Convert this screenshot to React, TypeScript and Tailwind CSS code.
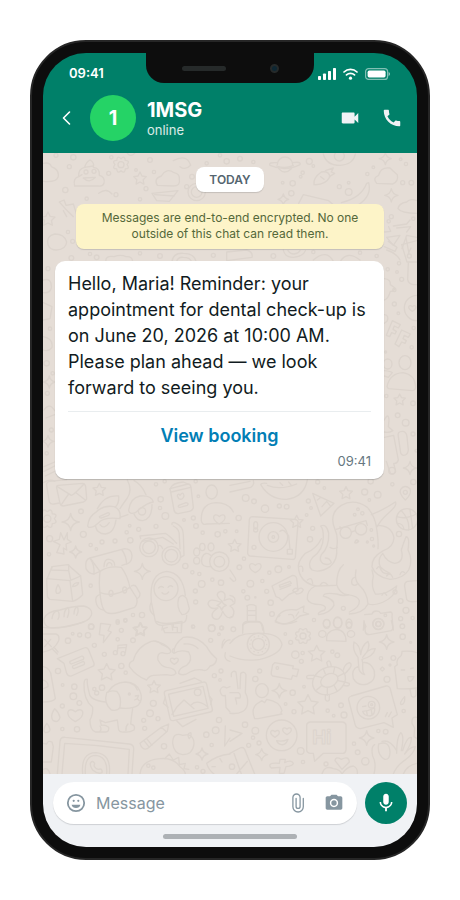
import type { ReactNode } from "react";
import { MdCall, MdMic, MdPhotoCamera, MdVideocam } from "react-icons/md";

// ─────────────────────────────────────────────────────────────────────────────
// Chat preview — a phone frame with one business message in it
// ─────────────────────────────────────────────────────────────────────────────

interface Message {
  text: string;
  action: string;
  time: string;
}

const CONTACT = { initial: "1", name: "1MSG", status: "online" };

const MESSAGE: Message = {
  text: "Hello, Maria! Reminder: your appointment for dental check-up is on June 20, 2026 at 10:00 AM. Please plan ahead — we look forward to seeing you.",
  action: "View booking",
  time: "09:41",
};

// ── Wallpaper ────────────────────────────────────────────────────────────────

type Spot = [x: number, y: number, r: number];

interface TileProps {
  x: number;
  y: number;
  lines: string[];
  dots?: Spot[];
  stars?: Spot[];
  sparkles?: Spot[];
  gears?: Spot[];
  hearts?: Spot[];
  children?: ReactNode;
}

function starPoints([x, y, r]: Spot) {
  return Array.from({ length: 10 }, (_, i) => {
    const radius = i % 2 ? r * 0.5 : r;
    const angle = (i * Math.PI) / 5 - Math.PI / 2;
    return `${x + radius * Math.cos(angle)},${y + radius * Math.sin(angle)}`;
  }).join(" ");
}

function gearPath([x, y, r]: Spot) {
  const at = (i: number, radius: number) => {
    const angle = (i * Math.PI) / 8;
    return `${x + radius * Math.cos(angle)} ${y + radius * Math.sin(angle)}`;
  };
  let d = `M${at(0, r * 0.75)}`;
  for (let i = 0; i < 16; i += 2) d += `Q${at(i + 1, r * 1.3)} ${at(i + 2, r * 0.75)}`;
  return d + "Z";
}

function Tile({ x, y, lines, dots = [], stars = [], sparkles = [], gears = [], hearts = [], children }: TileProps) {
  return (
    <g transform={`translate(${x} ${y})`}>
      {lines.map((d) => (
        <path key={d} d={d} />
      ))}
      {dots.map(([cx, cy, r]) => (
        <circle key={`${cx}-${cy}-${r}`} cx={cx} cy={cy} r={r} />
      ))}
      {stars.map((s) => (
        <polygon key={s.join()} points={starPoints(s)} />
      ))}
      {sparkles.map(([cx, cy, r]) => (
        <path
          key={`${cx}-${cy}`}
          d={`M${cx} ${cy - r}Q${cx + 3} ${cy - 3} ${cx + r} ${cy}Q${cx + 3} ${cy + 3} ${cx} ${cy + r}Q${cx - 3} ${cy + 3} ${cx - r} ${cy}Q${cx - 3} ${cy - 3} ${cx} ${cy - r}Z`}
        />
      ))}
      {gears.map((g) => (
        <g key={g.join()}>
          <path d={gearPath(g)} />
          <circle cx={g[0]} cy={g[1]} r={g[2] * 0.38} />
        </g>
      ))}
      {hearts.map(([cx, cy, r]) => (
        <path
          key={`${cx}-${cy}`}
          d={`M${cx} ${cy + r}C${cx - r * 1.8} ${cy} ${cx - r} ${cy - r * 1.3} ${cx} ${cy - r * 0.4}C${cx + r} ${cy - r * 1.3} ${cx + r * 1.8} ${cy} ${cx} ${cy + r}Z`}
        />
      ))}
      {children}
    </g>
  );
}

function Wallpaper() {
  return (
    <svg
      viewBox="0 0 1122 1863"
      preserveAspectRatio="xMinYMin slice"
      className="absolute inset-0 size-full text-[#dcd4cd]"
      fill="none"
      stroke="currentColor"
      strokeWidth="4"
      strokeLinecap="round"
      strokeLinejoin="round"
      aria-hidden="true"
    >
      {/* top left: cloud, swirl face, paper boat */}
      <Tile
        x={-9}
        y={-9}
        lines={[
          "M10 40Q30 36 34 50Q60 60 54 82Q48 98 10 94",
          "M104 108Q98 84 116 80Q114 56 134 52Q138 36 150 30Q164 38 160 52Q180 54 178 76Q196 80 192 100Q188 110 176 108Z",
          "M130 84Q148 102 166 82Z",
          "M116 80L126 74M134 52L160 48",
          "M352 106Q340 86 364 78Q380 52 402 68Q420 72 418 88Q422 108 400 108Z",
          "M336 130L414 122L388 154L350 152Z",
          "M344 134L402 138",
          "M262 10Q272 22 284 10M400 32Q440 10 452 46Q436 62 420 50",
          "M58 156L72 150L78 166L100 162L112 200M58 156L76 176L100 200M70 182L80 200",
          "M24 284Q18 258 44 252Q74 252 80 276Q78 298 50 300Q30 300 24 284",
          "M198 336Q194 316 222 320Q242 312 258 320Q276 318 278 334",
          "M396 334Q400 308 430 310Q462 310 468 334M410 334Q414 320 430 322Q450 322 454 334",
          "M560 306L620 300Q640 306 636 322L560 332Z",
          "M176 130Q200 112 216 132",
        ]}
        dots={[
          [48, 16, 6], [88, 50, 6], [100, 22, 8], [76, 120, 8], [206, 70, 6], [214, 22, 5], [138, 66, 6], [162, 64, 6],
          [288, 60, 4], [330, 30, 7], [342, 66, 5], [318, 116, 6], [440, 110, 6], [300, 148, 5], [228, 134, 6],
          [470, 126, 26], [470, 126, 16], [456, 80, 7], [94, 324, 7], [150, 312, 5], [170, 322, 7], [300, 310, 5], [360, 318, 7],
          [540, 16, 5], [600, 26, 7], [640, 36, 5], [560, 34, 8], [500, 40, 5], [520, 316, 6], [700, 318, 7], [140, 146, 5],
          [84, 246, 5], [98, 274, 6],
        ]}
        stars={[[300, 86, 20], [24, 208, 22]]}
        gears={[[243, 44, 24]]}
      />

      {/* top right: planet, camera, banana, clouds */}
      <Tile
        x={651}
        y={-9}
        lines={[
          "M52 44A23 23 0 0 1 98 44M56 56Q74 76 94 56",
          "M52 38Q24 36 30 46Q76 66 120 44Q124 34 98 38",
          "M50 48Q76 58 100 46",
          "M162 104Q158 84 184 66Q206 62 210 80Q196 106 162 104",
          "M196 62L220 54L214 66L224 70L208 80M182 80L192 88",
          "M350 100Q336 84 356 76Q362 50 390 54Q400 64 412 74Q416 96 398 102Z",
          "M326 98Q336 138 296 164M320 100Q304 144 244 158M320 100L326 98",
          "M471 152Q450 144 440 156Q416 160 414 176Q424 190 471 190",
          "M116 160L130 134L206 152L222 166",
          "M374 246L392 244L386 230M400 228L440 222L450 210M410 234L452 230L440 246",
          "M380 262L420 256L400 286Z",
          "M426 296L440 256L471 262M438 262L446 306",
          "M380 300Q410 310 420 330",
          "M70 300Q74 322 100 322Q128 320 136 302M84 302Q90 312 102 312Q116 310 120 302",
          "M190 12Q198 46 240 46Q280 44 286 12",
          "M160 330Q200 296 220 334M240 336Q260 300 300 330",
        ]}
        dots={[
          [238, 18, 15], [148, 34, 9], [128, 68, 5], [98, 100, 8], [68, 98, 4], [94, 130, 8], [122, 80, 4], [160, 48, 4],
          [238, 110, 6], [266, 126, 10], [266, 98, 4], [322, 72, 5], [428, 98, 6], [454, 98, 7], [438, 42, 5], [422, 28, 4],
          [340, 52, 4], [394, 200, 6], [386, 214, 5], [460, 206, 5], [448, 318, 6], [160, 306, 5], [350, 318, 5], [300, 308, 5],
        ]}
        sparkles={[[376, 26, 18], [394, 136, 20], [70, 148, 16]]}
      />

      {/* strip right of the message */}
      <Tile
        x={996}
        y={261}
        lines={[
          "M80 14L126 2M80 14L96 66H126M100 70L98 118Q100 132 116 134H126",
          "M28 20L60 34L66 22L40 4M100 40L108 24",
          "M28 116Q48 118 46 134L60 144Q56 156 46 154Q40 176 28 180",
          "M36 440Q44 400 84 398Q120 404 122 440Q122 450 112 452L40 446Z",
          "M28 392Q48 394 52 398L40 412L28 408",
          "M28 540Q40 516 42 540L40 560L54 572Q40 580 28 576",
          "M70 590Q66 574 82 574Q94 574 96 590L100 630Q98 646 86 646Q76 644 76 632Z",
          "M28 592L56 586L70 660Q66 672 56 670L62 694Q56 706 46 700L34 664",
          "M28 224Q44 226 36 244L28 250",
        ]}
        dots={[
          [72, 70, 5], [38, 88, 5], [66, 96, 4], [80, 118, 6], [58, 150, 5], [58, 192, 6], [70, 220, 4], [126, 204, 38],
          [116, 264, 5], [110, 322, 5], [34, 468, 5], [114, 490, 7], [68, 526, 7], [92, 548, 10], [114, 582, 6], [32, 336, 3], [124, 632, 4],
        ]}
        stars={[[74, 480, 18]]}
        sparkles={[[105, 684, 20]]}
        hearts={[[112, 204, 10]]}
      >
        <ellipse cx="90" cy="368" rx="18" ry="21" />
        <ellipse cx="38" cy="372" rx="13" ry="15" />
        <path d="M34 286L52 242L76 254L70 264L58 258L54 268L64 274L60 282L50 278L44 290Z" />
        <path d="M60 312L80 270L106 282L100 292L88 286L84 296L94 302L90 310L80 306L72 320Z" />
      </Tile>

      {/* strip left of the message */}
      <Tile
        x={-9}
        y={321}
        lines={[
          "M10 60Q36 52 34 84Q30 100 10 98",
          "M10 128L36 140L30 176L10 180",
          "M10 230Q40 236 36 262Q26 276 10 270",
          "M12 450Q28 426 44 452M18 474L44 464",
          "M12 620L44 606M12 634L44 618M16 648L44 634",
          "M10 668Q30 656 44 664",
        ]}
        dots={[[24, 26, 6], [30, 206, 5], [20, 310, 8], [38, 340, 5], [22, 400, 6], [34, 510, 6], [20, 580, 5]]}
        sparkles={[[28, 366, 18], [24, 544, 18]]}
      />

      {/* envelope, scooter, skates, backpack */}
      <Tile
        x={-9}
        y={951}
        lines={[
          "M54 46L128 40Q136 42 137 50L140 86Q138 94 130 96L70 108Q62 108 60 100L50 54Q48 48 54 46Z",
          "M52 50L94 76Q100 76 132 42M64 104L86 72M136 90L108 68",
          "M80 29L28 34Q18 38 20 46L28 96Q32 104 42 102L58 99",
          "M143 168Q146 140 166 128Q190 104 222 110Q244 118 240 146Q190 140 174 160Q160 174 146 172Z",
          "M172 116Q194 74 236 78Q238 100 226 111",
          "M240 142L264 134M166 166Q170 192 196 192Q222 190 228 150M180 164Q192 180 208 158",
          "M178 140L204 128Q212 130 206 136L184 144Q178 144 178 140Z",
          "M262 30Q278 60 262 84Q250 100 240 116M282 32Q304 42 318 74",
          "M266 122Q270 84 300 78Q334 74 340 96Q320 98 286 128Q268 134 266 122Z",
          "M282 132Q290 152 308 152Q336 148 336 104",
          "M390 56L444 42Q452 42 453 52L460 112Q458 122 448 124L414 131Q404 130 402 120Z",
          "M390 56Q398 38 430 36L444 42M394 66L452 52",
          "M416 106L438 98Q448 100 442 106L420 112Q412 112 416 106Z",
          "M412 78Q414 68 420 76Q430 62 432 78Q428 92 416 86Z",
          "M484 152Q482 100 528 98Q566 98 580 126M484 152Q486 166 500 162L568 160",
          "M40 214L58 208L62 188L72 210L82 188L82 208L94 216L78 222L80 240L70 234L72 252L50 248L60 224Z",
          "M302 206L300 198L376 190Q388 196 410 220M306 214L368 202L400 222M396 164Q394 156 404 158Q430 168 430 194L432 256L422 262M400 168Q420 178 418 200L420 236M354 228Q362 222 368 236",
          "M512 256Q496 242 486 262Q480 288 500 290L514 290",
          "M20 330L36 290L84 284L122 318L128 374Q112 390 98 394L30 388Q22 386 22 376Z",
          "M20 326L90 332L122 318M90 332L98 394M36 290L34 300L86 302L92 330M86 302L86 284",
          "M54 344Q44 362 50 370Q60 372 62 362Q60 352 54 344M98 350Q100 338 116 338Q114 348 98 350",
          "M12 446Q20 424 60 420Q100 408 130 408Q160 414 154 436Q146 456 110 462Q60 476 28 472Q10 466 12 446Z",
          "M36 446Q38 426 52 422Q62 430 54 448M72 440Q72 420 84 412Q90 426 82 442M102 432Q102 416 112 410Q118 422 110 436",
          "M150 264L254 236Q274 236 276 256Q276 276 264 280L246 286M180 304L162 312Q146 312 138 296Q134 268 150 264Z",
          "M150 264Q164 284 162 312M246 240Q258 256 260 282",
          "M180 304Q176 340 180 368Q222 384 270 352Q262 316 244 292Q206 286 180 304",
          "M180 368Q184 420 200 428Q212 434 240 426L284 412Q294 402 290 384L270 352",
          "M180 374Q164 378 168 396Q172 418 190 420M274 348Q284 342 290 352L300 370Q300 384 290 386",
          "M192 290Q192 266 208 268Q224 270 224 286M200 288Q202 276 210 278Q216 280 216 286",
          "M334 396Q326 310 380 304Q428 308 436 376M334 396L346 454Q350 466 366 466L430 458Q440 456 440 436",
          "M356 354Q362 346 370 352M384 352Q390 344 398 350M366 368Q376 378 386 366",
          "M416 384Q428 368 440 386L448 416Q444 434 426 434Q408 412 416 384M334 396Q322 420 342 436",
          "M368 466L366 480M396 464L398 480M424 460V480",
          "M545 392Q520 372 542 364Q562 366 552 392Q574 380 580 396M540 396Q506 382 504 402Q510 420 534 414Q506 432 522 446Q540 454 548 424Q560 450 576 440",
        ]}
        dots={[
          [306, 124, 11], [348, 43, 5], [374, 34, 5], [362, 88, 8], [360, 114, 5], [376, 138, 10], [123, 124, 7], [130, 193, 9],
          [29, 206, 9], [27, 253, 5], [152, 225, 5], [169, 237, 4], [186, 216, 6], [225, 213, 6], [260, 187, 5], [269, 167, 4],
          [296, 178, 6], [348, 169, 6], [271, 211, 8], [467, 34, 5], [475, 79, 4], [432, 150, 4], [460, 144, 6], [468, 168, 7],
          [488, 188, 5], [533, 193, 8], [556, 184, 5], [327, 232, 28], [327, 232, 19], [394, 257, 28], [394, 257, 19],
          [538, 275, 29], [538, 275, 16], [436, 288, 8], [457, 307, 5], [478, 312, 5], [485, 342, 10], [466, 363, 6], [467, 396, 6],
          [517, 329, 5], [543, 338, 8], [152, 347, 5], [378, 356, 36], [279, 435, 5], [306, 435, 8], [256, 450, 5], [233, 458, 5],
          [154, 470, 8], [460, 470, 4], [515, 474, 10], [545, 474, 6],
        ]}
        stars={[[178, 60, 20], [302, 478, 20]]}
        sparkles={[[92, 156, 26], [107, 246, 18], [307, 304, 24], [545, 406, 14]]}
        gears={[[22, 146, 28]]}
        hearts={[[538, 146, 16]]}
      >
        <ellipse cx="515" cy="66" rx="17" ry="21" />
        <ellipse cx="470" cy="246" rx="9" ry="12" />
        <ellipse cx="487" cy="231" rx="8" ry="11" />
        <ellipse cx="513" cy="231" rx="9" ry="12" />
        <ellipse cx="470" cy="272" rx="9" ry="10" />
        <ellipse cx="213" cy="370" rx="6" ry="9" />
        <ellipse cx="254" cy="360" rx="6" ry="9" />
      </Tile>

      {/* record player, octopus, fish */}
      <Tile
        x={561}
        y={951}
        lines={[
          "M92 44Q120 90 170 88Q222 82 232 30M92 44Q94 38 110 40M112 46Q150 62 200 42M150 38L158 46M176 36L184 46",
          "M0 46L60 34M0 66L62 52Q74 44 70 32",
          "M248 70L312 100L272 138ZM276 110L290 94L300 106M262 90L270 84",
          "M526 90Q506 72 512 58Q524 42 540 56Q546 72 526 90Z",
          "M68 140L194 148Q206 150 204 160L196 262Q194 270 186 268L60 258Q52 256 53 246L58 148Q60 140 68 140Z",
          "M150 184Q160 176 168 188L176 198L180 238M172 238H187V252H172Z",
          "M320 234Q326 200 314 176Q296 130 334 106Q372 84 412 112Q436 140 440 176Q446 216 444 236",
          "M318 178L408 152L412 166M364 186L376 182M330 170L332 176",
          "M320 234Q324 270 300 290Q270 310 246 300Q230 284 248 262Q280 240 280 200Q280 176 272 168Q290 160 296 190Q298 232 274 254Q266 270 278 280Q296 288 304 278Q300 264 286 264",
          "M274 206Q260 236 226 250Q200 276 206 300Q214 340 260 348L318 346M300 232Q312 240 322 232",
          "M340 284Q320 300 320 344Q330 372 352 374Q384 378 388 392Q390 412 358 426M378 300Q372 330 388 346Q412 368 414 402M414 402Q400 430 358 432",
          "M256 348Q230 360 232 388Q238 404 272 404Q292 408 284 420Q260 428 266 434Q300 430 312 406Q314 388 280 378Q282 366 320 372Q342 380 356 374",
          "M440 166Q486 166 492 204Q490 232 460 242Q424 262 426 290Q436 320 480 328Q520 326 536 300Q550 270 534 240Q540 200 528 200Q520 220 514 240Q524 276 494 280Q470 276 458 250M450 290Q452 312 478 312M458 250Q440 270 452 292Q464 304 480 310",
          "M424 134Q460 120 496 96Q504 106 470 134Q450 152 442 170",
          "M430 318Q422 350 436 372Q466 376 500 348Q496 380 460 396Q430 408 416 402M426 300L430 318",
          "M374 322Q362 326 366 342Q374 350 382 342M270 346Q280 328 294 346M232 330Q246 318 248 340M206 290Q222 284 218 304M374 218Q378 206 386 214Q380 222 374 218",
          "M440 296Q448 284 452 296M470 318Q480 304 488 322M510 314Q514 300 524 308M456 376Q462 362 470 376",
          "M500 140Q530 150 562 130M514 122Q540 150 536 180M502 160Q520 160 522 178M540 118L548 176",
          "M126 348L188 316Q198 316 200 326L204 362L176 374L156 392L148 384L138 380Z",
          "M148 346L180 334L184 340L150 352ZM150 358L182 346",
          "M188 362Q196 350 204 358Q216 350 220 360Q214 372 200 372Z",
          "M136 456Q148 412 200 420L222 408L220 426L236 432L210 438Q170 474 136 456ZM176 434Q190 430 192 444M150 436L146 440M206 426L198 438",
          "M404 434L426 432Q430 420 446 424L452 430L482 426Q488 426 486 440L490 480M400 480L408 470L402 456Z",
          "M50 408Q64 400 78 408V452M52 408V452M52 422H78M52 436H78M38 480V464Q42 454 52 454H84Q96 456 98 480",
          "M561 332L532 334Q522 338 524 350L530 388Q536 398 561 394",
          "M0 300L16 324Q20 334 10 334L0 324M0 376Q20 380 14 400Q0 408 0 408Q18 420 8 440L0 444",
        ]}
        dots={[
          [263, 36, 6], [283, 54, 4], [235, 93, 6], [243, 114, 4], [230, 135, 4], [422, 34, 8], [404, 66, 9], [443, 74, 10],
          [487, 43, 5], [418, 90, 4], [526, 67, 6], [550, 36, 8], [486, 2, 10], [47, 84, 10], [72, 94, 7], [105, 116, 11],
          [148, 108, 6], [170, 110, 7], [20, 184, 4], [26, 144, 8], [130, 201, 43], [130, 201, 16], [130, 201, 4], [72, 232, 6], [77, 180, 6],
          [248, 175, 6], [240, 208, 8], [42, 266, 5], [28, 292, 7], [145, 298, 10], [177, 291, 4], [118, 308, 5], [61, 341, 10],
          [97, 333, 5], [40, 364, 5], [110, 364, 6], [52, 383, 7], [76, 382, 2], [122, 398, 8], [126, 432, 7], [347, 188, 17], [393, 178, 17],
          [384, 118, 4], [374, 134, 4], [397, 130, 5], [424, 180, 4], [426, 207, 5], [412, 216, 3], [431, 228, 3], [380, 214, 4],
          [531, 148, 32], [507, 192, 8], [495, 366, 6], [512, 393, 7], [340, 415, 6], [528, 421, 9], [512, 446, 6], [548, 444, 5],
          [252, 450, 5], [445, 462, 17], [445, 462, 8], [466, 436, 4],
        ]}
        stars={[[348, 70, 20], [200, 156, 20], [14, 228, 20]]}
        hearts={[[76, 292, 16]]}
      >
        <ellipse cx="77" cy="166" rx="6" ry="11" />
        <ellipse cx="290" cy="460" rx="10" ry="12" />
        <ellipse cx="323" cy="458" rx="13" ry="17" />
        <ellipse cx="357" cy="466" rx="8" ry="10" />
      </Tile>

      {/* heart hands, puppy, photo, tv set */}
      <Tile
        x={-9}
        y={1401}
        lines={[
          "M10 22Q70 30 134 4",
          "M10 42H48Q60 46 56 62Q44 90 10 96M14 58L34 80M32 58L14 80M38 88L52 102M44 84L54 96",
          "M52 116L132 84Q142 80 146 90L162 130Q164 138 156 140L94 168Q84 170 80 160L72 130Z",
          "M90 124L126 108Q134 112 130 118L94 132Q88 130 90 124ZM98 138L130 124Q136 128 132 134L102 146Q96 144 98 138Z",
          "M182 10L212 14L204 32L214 36L190 68L192 46L178 44Z",
          "M232 98L234 76L260 74L256 98M234 84L258 82",
          "M320 180Q290 170 268 140Q266 126 280 122Q290 80 334 64Q352 60 366 74Q392 84 392 96Q388 104 366 98Q350 100 354 120Q364 140 380 142Q406 144 408 160Q400 170 380 164L340 166Q326 168 320 180Z",
          "M346 64Q376 70 390 88M402 100Q400 74 430 52Q470 46 500 80Q510 100 530 116Q528 136 510 138Q500 156 488 150Q470 146 450 156Q430 170 416 160Q416 144 440 136Q460 120 446 96Q420 88 402 100Q392 96 400 86M432 72Q460 70 474 86",
          "M204 216Q220 188 256 186Q290 188 300 214Q310 238 296 254Q280 268 240 264M236 190Q260 180 284 196L292 210",
          "M200 218Q190 250 214 270Q232 274 240 262Q246 230 230 214Q212 210 200 218Z",
          "M196 246Q150 240 148 220Q140 190 142 178Q134 174 132 190Q130 240 158 262Q160 280 150 300Q150 330 166 336H198Q208 334 206 322Q196 314 184 316L180 300L196 308L232 300L236 330Q240 338 254 336Q268 338 282 330Q288 316 272 312Q274 290 278 266",
          "M286 228L296 226L292 236L298 242M292 236L284 240M264 312Q256 320 258 332M180 318Q186 328 180 334",
          "M420 190L464 174L484 184M376 232L370 250L384 262M410 302L428 320L468 298M508 228L516 238L512 254",
          "M396 284L410 262L432 240L462 266M452 256Q470 236 500 258",
          "M300 370L364 322L386 312L382 334L322 386Q306 392 300 370ZM312 362L328 382M320 356L336 376M364 322L380 336",
          "M428 346Q398 334 398 370Q402 402 428 404Q458 404 462 372Q462 338 428 346ZM446 354Q440 340 452 338Q456 346 448 356",
          "M44 266Q28 290 40 302Q56 310 60 292Q56 276 44 266ZM20 310Q6 330 16 338Q30 338 30 328Q28 318 20 310Z",
          "M52 462L60 364Q62 350 76 352L268 372Q282 374 281 388L276 462M66 462L74 370Q170 374 268 388L264 462",
          "M128 462Q122 398 168 398Q214 402 208 462M136 462Q132 406 168 406Q204 410 200 462",
          "M152 428Q158 420 164 430L162 438Q168 448 176 448Q188 444 186 458Q174 464 158 450Q148 436 152 428Z",
          "M300 462Q304 420 360 416Q400 412 420 440Q436 452 436 462M376 414L388 402L400 420L416 412L418 434L436 430L432 446L446 448",
          "M500 430Q530 406 570 402M500 430Q506 450 522 462M540 416L546 426M516 440H526",
          "M10 140Q32 144 34 170L46 236Q40 246 10 246M10 180Q26 186 24 200L10 206",
          "M10 370L20 372Q24 360 36 366L40 380L34 426H10M10 448Q24 440 30 462",
          "M350 4Q370 16 426 4L424 38H374L370 26L382 22M400 10V22H412V36",
          "M570 60Q556 58 546 84Q546 62 554 58M570 124Q550 120 556 98M540 212Q546 194 560 204L570 200M540 212Q544 232 556 226L558 262L570 276M556 318L554 378L570 354",
        ]}
        dots={[
          [233, 4, 5], [256, 2, 5], [153, 20, 8], [98, 41, 4], [119, 45, 6], [144, 46, 8], [84, 62, 8], [163, 76, 6], [244, 31, 6],
          [279, 61, 7], [233, 58, 5], [193, 103, 6], [244, 138, 8], [257, 158, 5], [54, 153, 8], [68, 195, 4], [103, 200, 8],
          [100, 229, 10], [118, 249, 7], [67, 258, 6], [67, 327, 5], [111, 328, 8], [186, 203, 8], [163, 207, 5], [170, 219, 6],
          [268, 222, 3], [340, 250, 9], [330, 280, 10], [354, 296, 6], [311, 301, 6], [314, 325, 6], [372, 379, 8], [473, 217, 10],
          [515, 25, 10], [459, 20, 5], [537, 43, 4], [512, 61, 6], [523, 167, 6], [543, 153, 6], [540, 180, 4], [537, 300, 8],
          [499, 344, 8], [527, 331, 10], [515, 375, 5], [471, 442, 5], [489, 454, 6], [325, 437, 5], [340, 443, 5], [226, 98, 6], [249, 101, 6],
          [544, 24, 5],
        ]}
        stars={[[300, 30, 22], [200, 158, 27], [342, 202, 20]]}
        sparkles={[[486, 402, 18]]}
        hearts={[[403, 122, 11], [106, 284, 21]]}
      >
        <rect x="380" y="198" width="130" height="92" rx="8" transform="rotate(-13 445 244)" />
        <rect x="392" y="210" width="106" height="68" transform="rotate(-13 445 244)" />
      </Tile>

      {/* turtle, plant, faces, greeting bubble */}
      <Tile
        x={561}
        y={1401}
        lines={[
          "M0 70Q20 40 70 40Q150 36 156 74Q150 104 90 118Q40 126 0 108",
          "M38 40V18Q40 8 60 6H90Q100 10 102 38M136 2Q160 20 200 4",
          "M290 62Q286 34 318 28Q348 30 348 64Z",
          "M402 2L406 36Q408 44 418 44L484 32Q490 28 488 18L484 2",
          "M134 128L190 138L188 146L206 148L200 170L188 166L184 178L128 168Q122 164 124 156L128 134Z",
          "M248 176L232 176Q226 168 236 166L252 166M294 140L290 128Q298 116 302 130L304 140M340 150Q344 132 358 128Q368 132 360 144Q352 154 344 162M344 186L358 190Q360 198 350 198L340 196M298 226L298 240Q290 248 286 238L286 226",
          "M274 172L250 166M286 162L280 146M310 160L314 142M322 170L342 160M324 182L344 186M312 196L322 214M292 202L292 226M276 196L260 210",
          "M386 138Q362 148 370 176Q384 200 412 192Q440 182 432 150Q420 124 398 128V144Q398 158 404 164Q386 160 386 138M386 138L384 112Q366 90 372 66Q390 74 392 104M392 104Q396 74 414 64Q424 84 398 112Q416 84 436 86Q430 110 396 118L398 128",
          "M4 170V160Q10 150 18 156L24 206M30 206L32 160Q44 152 48 164L46 218Q58 240 50 262Q40 284 0 280M0 218H26Q34 224 30 234H16Q20 246 20 252",
          "M74 296Q62 268 80 252L96 242L104 248L110 238Q150 244 156 272Q150 278 156 282L84 296Z",
          "M140 362Q158 366 174 358Q168 376 154 374Q144 372 140 362Z",
          "M240 306H338Q348 308 348 316V390Q346 400 338 400H280L254 424L250 400H240Q230 398 230 390V316Q230 308 240 306Z",
          "M364 228L468 198Q476 196 480 204L502 284L486 294L490 322L462 308L392 326Q380 326 376 316L356 240Q354 232 364 228Z",
          "M398 260L408 258M398 274Q418 272 434 264Q436 284 420 288Q402 288 398 274ZM410 274L412 286M424 270L426 284M466 290L472 278M476 290L484 276",
          "M561 98Q544 92 516 94Q516 108 508 112Q498 120 502 134L494 140L502 206Q530 208 561 204M514 150H524M534 170H552Q546 184 538 184Q532 178 534 170M542 146L550 144M540 208L544 228Q552 236 558 226V208",
          "M524 230Q506 250 514 254Q526 252 524 230M561 292Q544 288 546 310L554 324L552 350L561 356",
          "M432 462Q440 430 428 408Q422 380 434 374M446 372Q478 360 480 396Q480 420 464 418Q440 404 446 372M456 364Q480 358 500 392M500 400Q500 350 512 338Q524 346 514 392M518 392Q530 350 544 352Q546 370 524 402Q540 380 556 380Q552 400 528 418Q500 436 490 462M561 430Q530 436 520 462",
          "M315 422Q316 408 334 418Q356 406 358 426L336 448ZM276 462Q284 434 310 446Q330 448 336 462Q350 440 370 438Q384 444 382 462",
          "M120 434Q124 428 148 430L150 418H166L164 428Q184 418 190 430Q188 438 168 440L162 460H148L150 442L124 444Q118 440 120 434Z",
          "M0 400L30 384Q40 380 44 388L74 462M0 330L36 340L0 364M20 462L52 424M12 400L34 462",
        ]}
        dots={[
          [85, 73, 33], [85, 73, 18], [10, 28, 7], [166, 42, 4], [182, 67, 6], [196, 104, 11], [218, 99, 5], [214, 124, 6],
          [89, 153, 6], [76, 177, 8], [188, 218, 8], [222, 200, 4], [167, 252, 4], [192, 275, 6], [293, 272, 5], [311, 287, 4],
          [333, 256, 7], [342, 285, 9], [307, 95, 5], [322, 106, 7], [142, 144, 4], [453, 115, 5], [490, 114, 7], [480, 135, 3],
          [471, 178, 9], [517, 19, 7], [518, 50, 8], [542, 67, 3], [521, 273, 5], [467, 335, 7], [445, 333, 5], [45, 314, 8],
          [76, 332, 10], [69, 353, 5], [87, 369, 6], [56, 376, 6], [155, 346, 46], [212, 393, 10], [219, 426, 5], [288, 432, 6],
          [372, 371, 5], [383, 397, 7], [406, 424, 11], [415, 263, 34], [425, 254, 10], [425, 254, 3], [445, 12, 16], [445, 12, 7], [6, 440, 8],
        ]}
        stars={[[260, 102, 26], [234, 256, 32]]}
        sparkles={[[470, 66, 22], [148, 212, 22], [410, 354, 22], [95, 404, 18], [457, 147, 6]]}
        gears={[[219, 48, 24]]}
        hearts={[[135, 340, 12], [171, 332, 12]]}
      >
        <circle cx="85" cy="73" r="25" strokeDasharray="1 12" />
        <ellipse cx="290" cy="12" rx="10" ry="13" />
        <ellipse cx="323" cy="8" rx="12" ry="15" />
        <ellipse cx="357" cy="10" rx="9" ry="13" />
        <ellipse cx="277" cy="42" rx="11" ry="10" />
        <ellipse cx="363" cy="42" rx="11" ry="10" />
        <ellipse cx="96" cy="212" rx="19" ry="21" />
        <ellipse cx="297" cy="182" rx="51" ry="40" transform="rotate(-25 297 182)" />
        <ellipse cx="298" cy="181" rx="27" ry="19" transform="rotate(-25 298 181)" />
        <text x="247" y="372" fontSize="56" className="font-bold" strokeWidth="3">
          Hi
        </text>
      </Tile>
    </svg>
  );
}

// ── Small icons ──────────────────────────────────────────────────────────────

function SignalIcon() {
  return (
    <svg viewBox="0 0 18 12" className="h-3 w-[18px]" fill="currentColor" aria-hidden="true">
      <rect x="0" y="8" width="3" height="4" rx="0.8" />
      <rect x="5" y="5.5" width="3" height="6.5" rx="0.8" />
      <rect x="10" y="3" width="3" height="9" rx="0.8" />
      <rect x="15" y="0" width="3" height="12" rx="0.8" />
    </svg>
  );
}

function WifiIcon() {
  return (
    <svg viewBox="0 0 15 12" className="h-3 w-[15px]" fill="none" stroke="currentColor" strokeWidth="1.7" strokeLinecap="round" aria-hidden="true">
      <path d="M1 4a9.3 9.3 0 0 1 13 0M3.5 6.900a5.800 5.800 0 0 1 8 0" />
      <circle cx="7.5" cy="10.2" r="1.6" fill="currentColor" stroke="none" />
    </svg>
  );
}

function BatteryIcon() {
  return (
    <svg viewBox="0 0 25 12" className="h-3 w-[25px]" fill="none" aria-hidden="true">
      <rect x="0.6" y="0.6" width="22" height="10.8" rx="3" stroke="currentColor" strokeWidth="1.2" opacity="0.5" />
      <rect x="2.6" y="2.6" width="18" height="6.8" rx="1.6" fill="currentColor" />
      <path d="M23.6 4v4Q25 7.500 25 6T23.600 4Z" fill="currentColor" opacity="0.6" />
    </svg>
  );
}

function SmileyIcon() {
  return (
    <svg viewBox="0 0 20 20" className="size-5" fill="none" aria-hidden="true">
      <circle cx="10" cy="10" r="8.2" stroke="currentColor" strokeWidth="1.8" />
      <circle cx="7.7" cy="7.8" r="1.1" fill="currentColor" />
      <circle cx="12.3" cy="7.8" r="1.1" fill="currentColor" />
      <path d="M5.600 11.800h8.800Q13.600 15 10 15T5.600 11.800Z" fill="currentColor" />
    </svg>
  );
}

function PaperclipIcon() {
  return (
    <svg viewBox="0 0 14 20" className="h-5 w-3.5" fill="none" stroke="currentColor" strokeWidth="1.3" strokeLinecap="round" aria-hidden="true">
      <path d="M12.300 5.500v8.300a5.200 5.200 0 0 1-10.400 0V4.600a3.600 3.600 0 0 1 7.200 0v8.800a2 2 0 0 1-4 0V5.500" />
    </svg>
  );
}

// ── Screen parts ─────────────────────────────────────────────────────────────

function StatusBar() {
  return (
    <div className="flex h-[42px] items-center justify-between pr-[27px] pl-[26px]">
      <span className="text-[13px] font-semibold">09:41</span>
      <div className="flex items-center gap-[7px]">
        <SignalIcon />
        <WifiIcon />
        <BatteryIcon />
      </div>
    </div>
  );
}

function Notch() {
  return (
    <div className="absolute top-0 left-1/2 flex h-[30px] w-[168px] -translate-x-1/2 items-center justify-center gap-11 rounded-b-[18px] bg-[#0d0d0d]">
      <span className="h-[5px] w-11 rounded-full bg-[#262a2a]" />
      <span className="size-[9px] rounded-full border-2 border-[#262a2a] bg-[#0e2733]" />
    </div>
  );
}

function ChatHeader() {
  return (
    <header className="bg-[#008069] text-white">
      <StatusBar />
      <div className="flex h-[58px] items-start px-3.5">
        <button type="button" aria-label="Back" className="flex h-[46px] w-[33px] items-center pl-1">
          <svg viewBox="0 0 10 16" className="h-4 w-2.5" fill="none" stroke="currentColor" strokeWidth="1.6" strokeLinecap="round" strokeLinejoin="round" aria-hidden="true">
            <path d="M8.500 2 2.500 8l6 6" />
          </svg>
        </button>
        <div className="flex size-[46px] shrink-0 items-center justify-center rounded-full bg-[#25d366] text-xl font-bold">
          {CONTACT.initial}
        </div>
        <div className="ml-[11px] flex h-[46px] min-w-0 flex-1 flex-col justify-center">
          <h1 className="text-xl leading-6 font-bold">{CONTACT.name}</h1>
          <p className="text-[13px] leading-4 text-white/85">{CONTACT.status}</p>
        </div>
        <div className="flex h-[46px] items-center gap-5 text-[22px] text-[#f0f2f5]">
          <button type="button" aria-label="Video call">
            <MdVideocam />
          </button>
          <button type="button" aria-label="Voice call">
            <MdCall />
          </button>
        </div>
      </div>
    </header>
  );
}

function Bubble({ message }: { message: Message }) {
  return (
    <article className="w-[94%] rounded-[10px] bg-white px-[13px] pt-2.5 pb-2 shadow-[0_1px_1px_rgba(11,20,26,0.2)]">
      <p className="text-lg leading-[26px] text-[#111b21]">{message.text}</p>
      <div className="mt-2.5 border-t border-[#e9edef] pt-3 text-center">
        <a href="#booking" className="text-lg leading-6 font-semibold text-[#027eb5]">
          {message.action}
        </a>
      </div>
      <time className="mt-[3px] block text-right text-[13px] leading-5 text-[#667781]">{message.time}</time>
    </article>
  );
}

function Composer() {
  return (
    <footer className="bg-[#f0f2f5] px-2.5 py-2">
      <form className="flex gap-2" onSubmit={(e) => e.preventDefault()}>
        <div className="flex h-[42px] min-w-0 flex-1 items-center rounded-full bg-white px-[13px] text-[#8696a0] shadow-[0_1px_1px_rgba(11,20,26,0.15)]">
          <button type="button" aria-label="Emoji">
            <SmileyIcon />
          </button>
          <input
            type="text"
            aria-label="Message"
            placeholder="Message"
            className="ml-2.5 min-w-0 flex-1 bg-transparent text-base outline-none placeholder:text-[#8696a0]"
          />
          <button type="button" aria-label="Attach file" className="mr-[19px]">
            <PaperclipIcon />
          </button>
          <button type="button" aria-label="Take photo" className="text-xl">
            <MdPhotoCamera />
          </button>
        </div>
        <button
          type="button"
          aria-label="Record voice message"
          className="flex size-[42px] shrink-0 items-center justify-center rounded-full bg-[#008069] text-[22px] text-white"
        >
          <MdMic />
        </button>
      </form>
      <div className="mx-auto mt-2.5 h-[5px] w-[134px] rounded-full bg-[#adb1b5]" />
    </footer>
  );
}

export default function App() {
  return (
    <main className="flex min-h-screen items-center justify-center bg-white px-[30px] py-10 font-['Inter',sans-serif] antialiased">
      <div className="w-full max-w-[400px] rounded-[56px] border-2 border-[#262626] bg-[#0d0d0d] p-[11px]">
        <div className="relative flex h-[794px] flex-col overflow-hidden rounded-[43px]">
          <ChatHeader />
          <Notch />
          <section className="relative flex-1 overflow-hidden bg-[#e5ddd6]">
            <Wallpaper />
            <div className="relative flex flex-col gap-3 px-3 pt-3.5">
              <span className="self-center rounded-lg bg-white px-[13px] py-1 text-xs leading-[17px] font-semibold text-[#54656f] shadow-[0_1px_1px_rgba(11,20,26,0.15)]">
                TODAY
              </span>
              <p className="w-[88%] self-center rounded-lg bg-[#fdf4c8] px-6 pt-1.5 pb-[7px] text-center text-xs leading-4 text-[#54683a] shadow-[0_1px_1px_rgba(11,20,26,0.15)]">
                Messages are end-to-end encrypted. No one outside of this chat can read them.
              </p>
              <Bubble message={MESSAGE} />
            </div>
          </section>
          <Composer />
        </div>
      </div>
    </main>
  );
}
